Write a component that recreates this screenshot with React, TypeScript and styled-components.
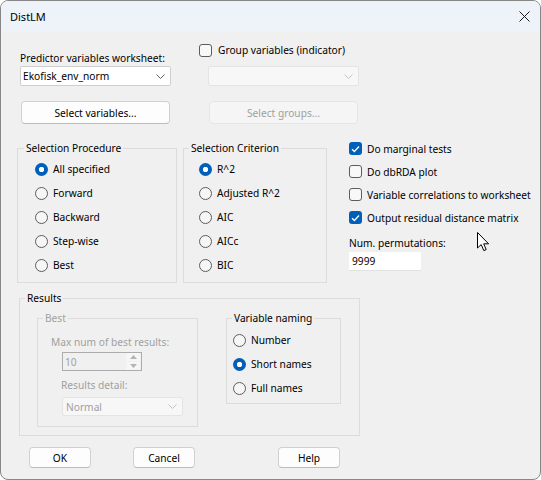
import React from "react";
import styled, { createGlobalStyle, css } from "styled-components";

const GlobalStyle = createGlobalStyle`
  html, body { margin: 0; padding: 0; background: #ffffff; }
  *, *::before, *::after { box-sizing: border-box; }
`;

const FONT = `"Noto Sans", "Liberation Sans", sans-serif`;
const BLUE = "#005fb8";
const GREY_TEXT = "#a0a0a0";

const Window = styled.div`
  position: relative;
  width: 541px;
  height: 480px;
  border: 1px solid #878787;
  border-radius: 8px;
  overflow: hidden;
  background: #f0f0f0;
  font-family: ${FONT};
  font-size: 10.2px;
  line-height: 14px;
  color: #000;
`;

const TitleBar = styled.div`
  height: 31px;
  background: #eef2f9;
  display: flex;
  align-items: center;
  justify-content: space-between;
  padding: 0 10px 0 9px;
`;

const Title = styled.span`
  font-size: 11px;
`;

const Body = styled.div`
  display: flex;
  flex-direction: column;
`;

/* ---------- generic controls ---------- */

const Text = styled.div<{ $disabled?: boolean; $ml?: number; $mt?: number }>`
  height: 14px;
  white-space: nowrap;
  color: ${(p) => (p.$disabled ? GREY_TEXT : "#000")};
  margin-left: ${(p) => p.$ml ?? 0}px;
  margin-top: ${(p) => p.$mt ?? 0}px;
`;

const Combo = styled.div<{
  $disabled?: boolean;
  $w: number;
  $h: number;
  $ml?: number;
  $mt?: number;
  $pl?: number;
}>`
  width: ${(p) => p.$w}px;
  height: ${(p) => p.$h}px;
  margin-left: ${(p) => p.$ml ?? 0}px;
  margin-top: ${(p) => p.$mt ?? 0}px;
  display: flex;
  align-items: center;
  justify-content: space-between;
  padding: 0 5px 0 ${(p) => p.$pl ?? 2}px;
  background: ${(p) => (p.$disabled ? "#f7f7f7" : "#ffffff")};
  border: 1px solid ${(p) => (p.$disabled ? "#e4e4e4" : "#cfcfcf")};
  border-radius: 2px;
  color: ${(p) => (p.$disabled ? GREY_TEXT : "#000")};
  white-space: nowrap;
`;

const PushButton = styled.button<{ $w: number; $h: number; $ml?: number; $mt?: number }>`
  font: inherit;
  width: ${(p) => p.$w}px;
  height: ${(p) => p.$h}px;
  margin: ${(p) => p.$mt ?? 0}px 0 0 ${(p) => p.$ml ?? 0}px;
  padding: 0;
  background: #fdfdfd;
  border: 1px solid #d0d0d0;
  border-bottom-color: #bcbcbc;
  border-radius: 4px;
  color: #000;
  &:disabled {
    background: #f5f5f5;
    border-color: #e5e5e5;
    color: ${GREY_TEXT};
  }
`;

const RadioDot = styled.span<{ $on?: boolean }>`
  flex: none;
  width: 13px;
  height: 13px;
  border-radius: 50%;
  ${(p) =>
    p.$on
      ? css`
          background: radial-gradient(circle, #ffffff 0 2.4px, ${BLUE} 3px);
        `
      : css`
          border: 1px solid #5c5c5c;
          background: #f6f6f6;
        `}
`;

const CheckBox = styled.span<{ $on?: boolean }>`
  flex: none;
  width: 13px;
  height: 13px;
  border-radius: 3px;
  display: flex;
  align-items: center;
  justify-content: center;
  ${(p) =>
    p.$on
      ? css`
          background: ${BLUE};
        `
      : css`
          border: 1px solid #5c5c5c;
          background: #f8f8f8;
        `}
`;

const OptionRow = styled.label<{ $h: number; $gap?: number }>`
  height: ${(p) => p.$h}px;
  display: flex;
  align-items: center;
  gap: ${(p) => p.$gap ?? 5}px;
  white-space: nowrap;
`;

const Group = styled.fieldset<{ $w: number; $ml?: number }>`
  margin: 0 0 0 ${(p) => p.$ml ?? 0}px;
  padding: 0;
  min-width: 0;
  width: ${(p) => p.$w}px;
  border: 1px solid #dcdcdc;
`;

const Legend = styled.legend<{ $disabled?: boolean; $ml?: number }>`
  margin-left: ${(p) => p.$ml ?? 5}px;
  padding: 0 2px;
  height: 14px;
  line-height: 14px;
  color: ${(p) => (p.$disabled ? GREY_TEXT : "#000")};
`;

const GroupInner = styled.div<{ $pl: number; $pt: number; $pb: number }>`
  display: flex;
  flex-direction: column;
  padding: ${(p) => p.$pt}px 0 ${(p) => p.$pb}px ${(p) => p.$pl}px;
`;

/* ---------- layout sections ---------- */

const TopSection = styled.div`
  display: flex;
  padding-left: 19px;
`;

const Column = styled.div<{ $w?: number; $ml?: number; $mt?: number }>`
  display: flex;
  flex-direction: column;
  ${(p) => (p.$w ? `width: ${p.$w}px;` : "")}
  margin-left: ${(p) => p.$ml ?? 0}px;
  margin-top: ${(p) => p.$mt ?? 0}px;
`;

const MiddleSection = styled.div`
  display: flex;
  align-items: flex-start;
  margin-top: 17px;
  padding-left: 16px;
`;

const ResultsSection = styled.div`
  margin-top: 8px;
  padding-left: 18px;
`;

const ResultsInner = styled.div`
  display: flex;
  align-items: flex-start;
  padding: 6px 0 8px 17px;
`;

const SpinBox = styled.div`
  width: 80px;
  height: 19px;
  margin: 3px 0 0 11px;
  display: flex;
  align-items: center;
  justify-content: space-between;
  padding-left: 2px;
  border: 1px solid #acacac;
  background: #f0f0f0;
  color: ${GREY_TEXT};
`;

const SpinButtons = styled.div`
  width: 14px;
  height: 17px;
  margin-right: 1px;
  display: flex;
  flex-direction: column;
  gap: 1px;
`;

const SpinHalf = styled.div`
  flex: 1;
  background: #f6f6f6;
  display: flex;
  align-items: center;
  justify-content: center;
`;

const PermInput = styled.div`
  width: 72px;
  height: 19px;
  margin-top: 2px;
  padding-left: 3px;
  display: flex;
  align-items: center;
  background: #ffffff;
  border-bottom: 1px solid #e2e2e2;
`;

const ButtonRow = styled.div`
  display: flex;
  margin-top: 11px;
  padding-left: 28px;
`;

const Cursor = styled.svg`
  position: absolute;
  left: 476px;
  top: 231px;
`;

/* ---------- small drawings ---------- */

const Chevron = ({ color }: { color: string }) => (
  <svg width="9" height="5" viewBox="0 0 9 5">
    <polyline points="0.5,0.5 4.5,4.5 8.5,0.5" fill="none" stroke={color} strokeWidth="1" />
  </svg>
);

const Check = () => (
  <svg width="9" height="8" viewBox="0 0 9 8">
    <polyline points="1,4.2 3.4,6.5 8,1.5" fill="none" stroke="#ffffff" strokeWidth="1.3" />
  </svg>
);

const CloseIcon = () => (
  <svg width="11" height="11" viewBox="0 0 11 11">
    <path d="M0.5 0.5 L10.5 10.5 M10.5 0.5 L0.5 10.5" stroke="#1b1b1b" strokeWidth="1" fill="none" />
  </svg>
);

const Tri = ({ up }: { up?: boolean }) => (
  <svg width="7" height="4" viewBox="0 0 7 4">
    <polygon points={up ? "0,4 7,4 3.5,0" : "0,0 7,0 3.5,4"} fill="#b4b4b4" />
  </svg>
);

const Radio = ({ on, label, h = 24, disabled }: { on?: boolean; label: string; h?: number; disabled?: boolean }) => (
  <OptionRow $h={h}>
    <RadioDot $on={on} />
    <Text $disabled={disabled}>{label}</Text>
  </OptionRow>
);

const Checkbox = ({ on, label, h = 23, gap = 5 }: { on?: boolean; label: string; h?: number; gap?: number }) => (
  <OptionRow $h={h} $gap={gap}>
    <CheckBox $on={on}>{on && <Check />}</CheckBox>
    <Text>{label}</Text>
  </OptionRow>
);

export default function App() {
  return (
    <>
      <GlobalStyle />
      <Window>
        <TitleBar>
          <Title>DistLM</Title>
          <CloseIcon />
        </TitleBar>
        <Body>
          <TopSection>
            <Column $w={151} $mt={19}>
              <Text>Predictor variables worksheet:</Text>
              <Combo $w={151} $h={20} $mt={1}>
                <span>Ekofisk_env_norm</span>
                <Chevron color="#606060" />
              </Combo>
              <PushButton $w={149} $h={23} $ml={1} $mt={15}>
                Select variables...
              </PushButton>
            </Column>
            <Column $ml={28} $mt={11}>
              <Checkbox label="Group variables (indicator)" h={14} gap={6} />
              <Combo $w={151} $h={20} $ml={9} $mt={9} $disabled>
                <span />
                <Chevron color="#c4c4c4" />
              </Combo>
              <PushButton $w={149} $h={23} $ml={10} $mt={15} disabled>
                Select groups...
              </PushButton>
            </Column>
          </TopSection>

          <MiddleSection>
            <Group $w={160}>
              <Legend $ml={6}>Selection Procedure</Legend>
              <GroupInner $pl={17} $pt={2} $pb={5}>
                <Radio on label="All specified" />
                <Radio label="Forward" />
                <Radio label="Backward" />
                <Radio label="Step-wise" />
                <Radio label="Best" />
              </GroupInner>
            </Group>
            <Group $w={144} $ml={6}>
              <Legend>Selection Criterion</Legend>
              <GroupInner $pl={15} $pt={2} $pb={5}>
                <Radio on label="R^2" />
                <Radio label="Adjusted R^2" />
                <Radio label="AIC" />
                <Radio label="AICc" />
                <Radio label="BIC" />
              </GroupInner>
            </Group>
            <Column $ml={22} $mt={-4}>
              <Checkbox on label="Do marginal tests" />
              <Checkbox label="Do dbRDA plot" />
              <Checkbox label="Variable correlations to worksheet" />
              <Checkbox on label="Output residual distance matrix" />
              <Text $mt={7}>Num. permutations:</Text>
              <PermInput>9999</PermInput>
            </Column>
          </MiddleSection>

          <ResultsSection>
            <Group $w={341}>
              <Legend>Results</Legend>
              <ResultsInner>
                <Group $w={161}>
                  <Legend $disabled>Best</Legend>
                  <GroupInner $pl={13} $pt={10} $pb={10}>
                    <Text $disabled>Max num of best results:</Text>
                    <SpinBox>
                      <span>10</span>
                      <SpinButtons>
                        <SpinHalf>
                          <Tri up />
                        </SpinHalf>
                        <SpinHalf>
                          <Tri />
                        </SpinHalf>
                      </SpinButtons>
                    </SpinBox>
                    <Text $disabled $ml={10} $mt={7}>
                      Results detail:
                    </Text>
                    <Combo $w={121} $h={19} $ml={11} $mt={5} $pl={3} $disabled>
                      <span>Normal</span>
                      <Chevron color="#c4c4c4" />
                    </Combo>
                  </GroupInner>
                </Group>
                <Group $w={115} $ml={28}>
                  <Legend>Variable naming</Legend>
                  <GroupInner $pl={6} $pt={3} $pb={3}>
                    <Radio label="Number" />
                    <Radio on label="Short names" />
                    <Radio label="Full names" />
                  </GroupInner>
                </Group>
              </ResultsInner>
            </Group>
          </ResultsSection>

          <ButtonRow>
            <PushButton $w={62} $h={21}>OK</PushButton>
            <PushButton $w={62} $h={21} $ml={42}>Cancel</PushButton>
            <PushButton $w={62} $h={21} $ml={83}>Help</PushButton>
          </ButtonRow>
        </Body>
        <Cursor width="13" height="20" viewBox="0 0 13 20">
          <path
            d="M0.5 0.5 L0.5 16 L4.2 12.6 L6.8 18.6 L9.2 17.6 L6.7 11.8 L11.6 11.8 Z"
            fill="#ffffff"
            stroke="#000000"
            strokeWidth="1"
            strokeLinejoin="round"
          />
        </Cursor>
      </Window>
    </>
  );
}
